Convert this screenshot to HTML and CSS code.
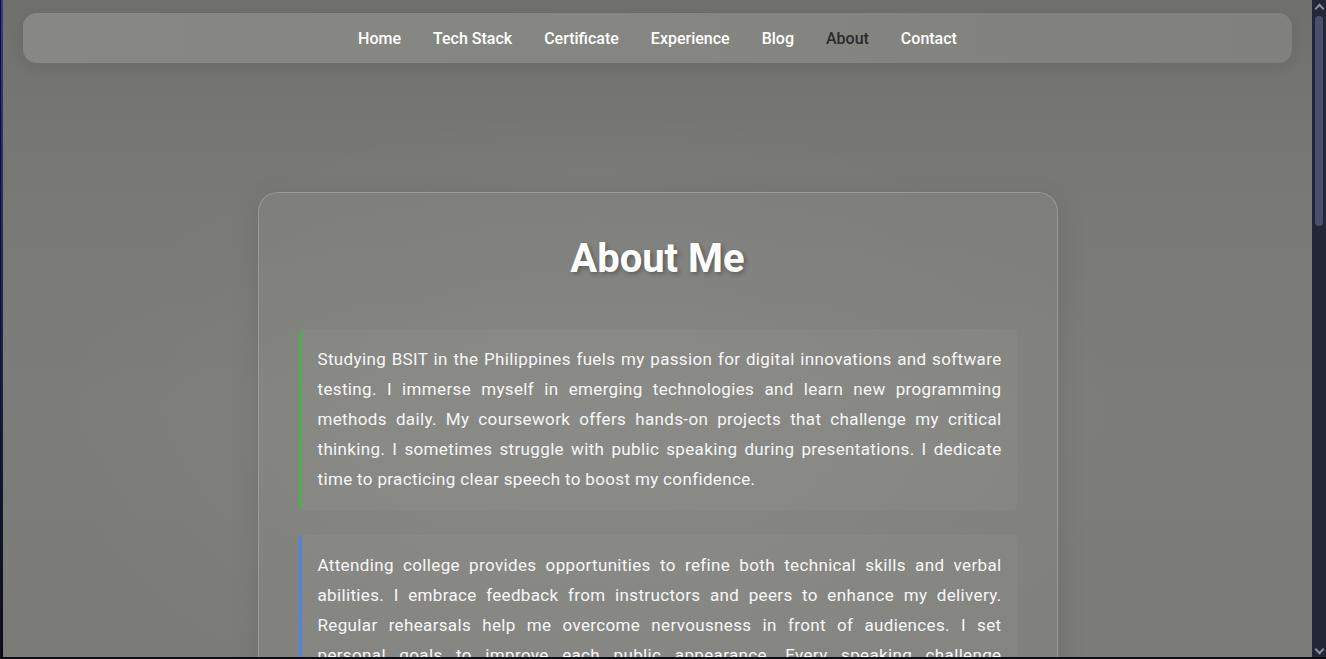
FILE: index.html
```html
<!DOCTYPE html>
<html lang="en">
<head>
<meta charset="utf-8">
<title>About Me</title>
<link rel="stylesheet" href="styles.css">
</head>
<body>
<div class="frame">
  <div class="edge"></div>
  <div class="viewport">
    <nav class="navbar">
      <a class="nav-link" href="#">Home</a>
      <a class="nav-link" href="#">Tech Stack</a>
      <a class="nav-link" href="#">Certificate</a>
      <a class="nav-link" href="#">Experience</a>
      <a class="nav-link" href="#">Blog</a>
      <a class="nav-link active" href="#">About</a>
      <a class="nav-link" href="#">Contact</a>
    </nav>
    <main class="content">
      <section class="card">
        <h2 class="card-title">About Me</h2>
        <p class="block block-green">Studying BSIT in the Philippines fuels my passion for digital innovations and software testing. I immerse myself in emerging technologies and learn new programming methods daily. My coursework offers hands-on projects that challenge my critical thinking. I sometimes struggle with public speaking during presentations. I dedicate time to practicing clear speech to boost my confidence.</p>
        <p class="block block-blue">Attending college provides opportunities to refine both technical skills and verbal abilities. I embrace feedback from instructors and peers to enhance my delivery. Regular rehearsals help me overcome nervousness in front of audiences. I set personal goals to improve each public appearance. Every speaking challenge strengthens my confidence and prepares me for future opportunities.</p>
      </section>
    </main>
  </div>
  <div class="scrollbar">
    <span class="sb-arrow sb-up"></span>
    <div class="sb-track"><div class="sb-thumb"></div></div>
    <span class="sb-arrow sb-down"></span>
  </div>
</div>
</body>
</html>
```

FILE: styles.css
```css
* { box-sizing: border-box; }
html, body { margin: 0; padding: 0; height: 100%; }
body {
  background: #0b0c10;
  font-family: Roboto, "Liberation Sans", sans-serif;
  overflow: hidden;
}
.frame {
  display: flex;
  height: 100vh;
  border-bottom: 2px solid #0b0c0f;
}
.edge {
  width: 3px;
  flex: none;
  background: linear-gradient(to bottom, #2c3c98 0%, #1c2260 50%, #0b0c12 100%);
  border-left: 1px solid #10131f;
}
.viewport {
  flex: 1;
  overflow: hidden;
  background:
    radial-gradient(ellipse at 45% 65%, rgba(255,255,255,0.05) 0%, rgba(255,255,255,0) 55%),
    linear-gradient(to bottom, #6f706b 0%, #787974 25%, #7c7d78 60%, #7b7c77 100%);
  display: flex;
  flex-direction: column;
}
.navbar {
  margin: 13px 20px 0;
  height: 50px;
  flex: none;
  border-radius: 14px;
  background: linear-gradient(to right, #878884, #858682 50%, #80817c);
  box-shadow: 0 4px 14px rgba(0,0,0,0.08);
  display: flex;
  align-items: center;
  justify-content: center;
  gap: 32px;
}
.nav-link {
  color: #ffffff;
  text-decoration: none;
  font-size: 16px;
  font-weight: 500;
}
.nav-link.active { color: #2b2b2b; }
.content {
  display: flex;
  justify-content: center;
  padding-top: 129px;
}
.card {
  width: 800px;
  flex: none;
  border: 1px solid rgba(255,255,255,0.2);
  border-radius: 20px;
  background: rgba(255,255,255,0.04);
  box-shadow: 0 8px 30px rgba(0,0,0,0.1);
  padding: 40px 40px 40px;
}
.card-title {
  margin: 0 0 44px;
  text-align: center;
  color: #ffffff;
  font-size: 40px;
  line-height: 52px;
  font-weight: 700;
  text-shadow: 2px 2px 4px rgba(0,0,0,0.3);
}
.block {
  margin: 0 0 25px;
  padding: 15px 15px 16px 16px;
  border-left: 3px solid #4caf50;
  border-radius: 5px;
  background: rgba(255,255,255,0.04);
  color: #f7f7f7;
  font-size: 17px;
  line-height: 30px;
  letter-spacing: 0.35px;
  text-align: justify;
}
.block-blue { border-left-color: #4a86e8; }
.scrollbar {
  width: 14px;
  flex: none;
  background: #232636;
  display: flex;
  flex-direction: column;
  align-items: center;
}
.sb-arrow {
  width: 14px;
  height: 12px;
  flex: none;
  display: flex;
  justify-content: center;
  align-items: center;
}
.sb-arrow::before {
  content: "";
  width: 5px;
  height: 5px;
  border-left: 2px solid #8b8ea3;
  border-top: 2px solid #8b8ea3;
}
.sb-up::before { transform: translateY(2px) rotate(45deg); }
.sb-down::before { transform: translateY(-2px) rotate(225deg); }
.sb-track {
  flex: 1;
  width: 100%;
  padding: 4px 3px 0;
}
.sb-thumb {
  width: 8px;
  height: 210px;
  border-radius: 4px;
  background: #4b4f6f;
}
```
